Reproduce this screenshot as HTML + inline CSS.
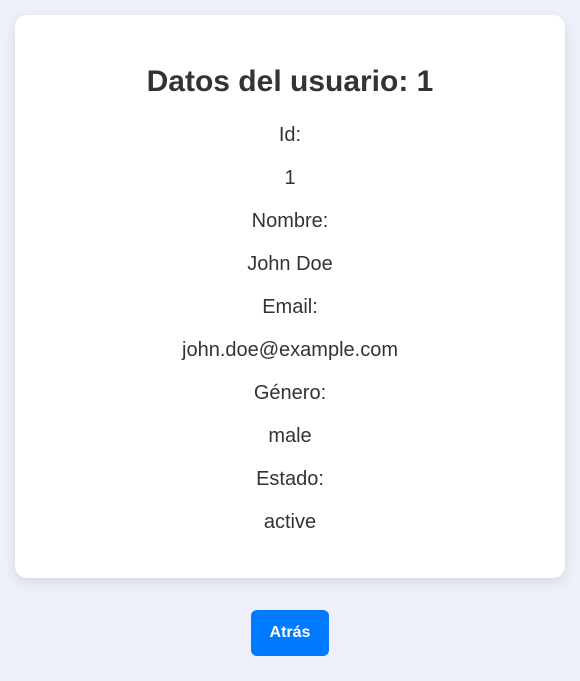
<!DOCTYPE html>
<html><head><meta charset="utf-8"><style>
body{margin:0;background:#edf0f8;font-family:"Liberation Sans",Arial,sans-serif;color:#333;width:580px;height:681px;overflow:hidden;position:relative}
.card{position:absolute;left:15px;top:15px;width:550px;height:563px;background:#fff;border-radius:12px;box-shadow:0 4px 12px rgba(0,0,0,0.1)}
h1{position:absolute;left:0;right:0;top:47px;margin:0;text-align:center;font-size:30px;line-height:40px;font-weight:bold;color:#333}
.rows{position:absolute;left:0;right:0;top:99px;text-align:center;font-size:20px}
.rows div{height:43px;line-height:43px}
.btn{position:absolute;left:251px;top:610px;width:78px;height:46px;background:#007bff;border-radius:6px;color:#fff;font-weight:bold;font-size:16px;line-height:46px;text-align:center}
</style></head><body>
<div class="card">
<h1>Datos del usuario: 1</h1>
<div class="rows">
<div>Id:</div><div>1</div><div>Nombre:</div><div>John Doe</div><div>Email:</div><div>john.doe@example.com</div><div>Género:</div><div>male</div><div>Estado:</div><div>active</div>
</div>
</div>
<div class="btn">Atrás</div>
</body></html>
